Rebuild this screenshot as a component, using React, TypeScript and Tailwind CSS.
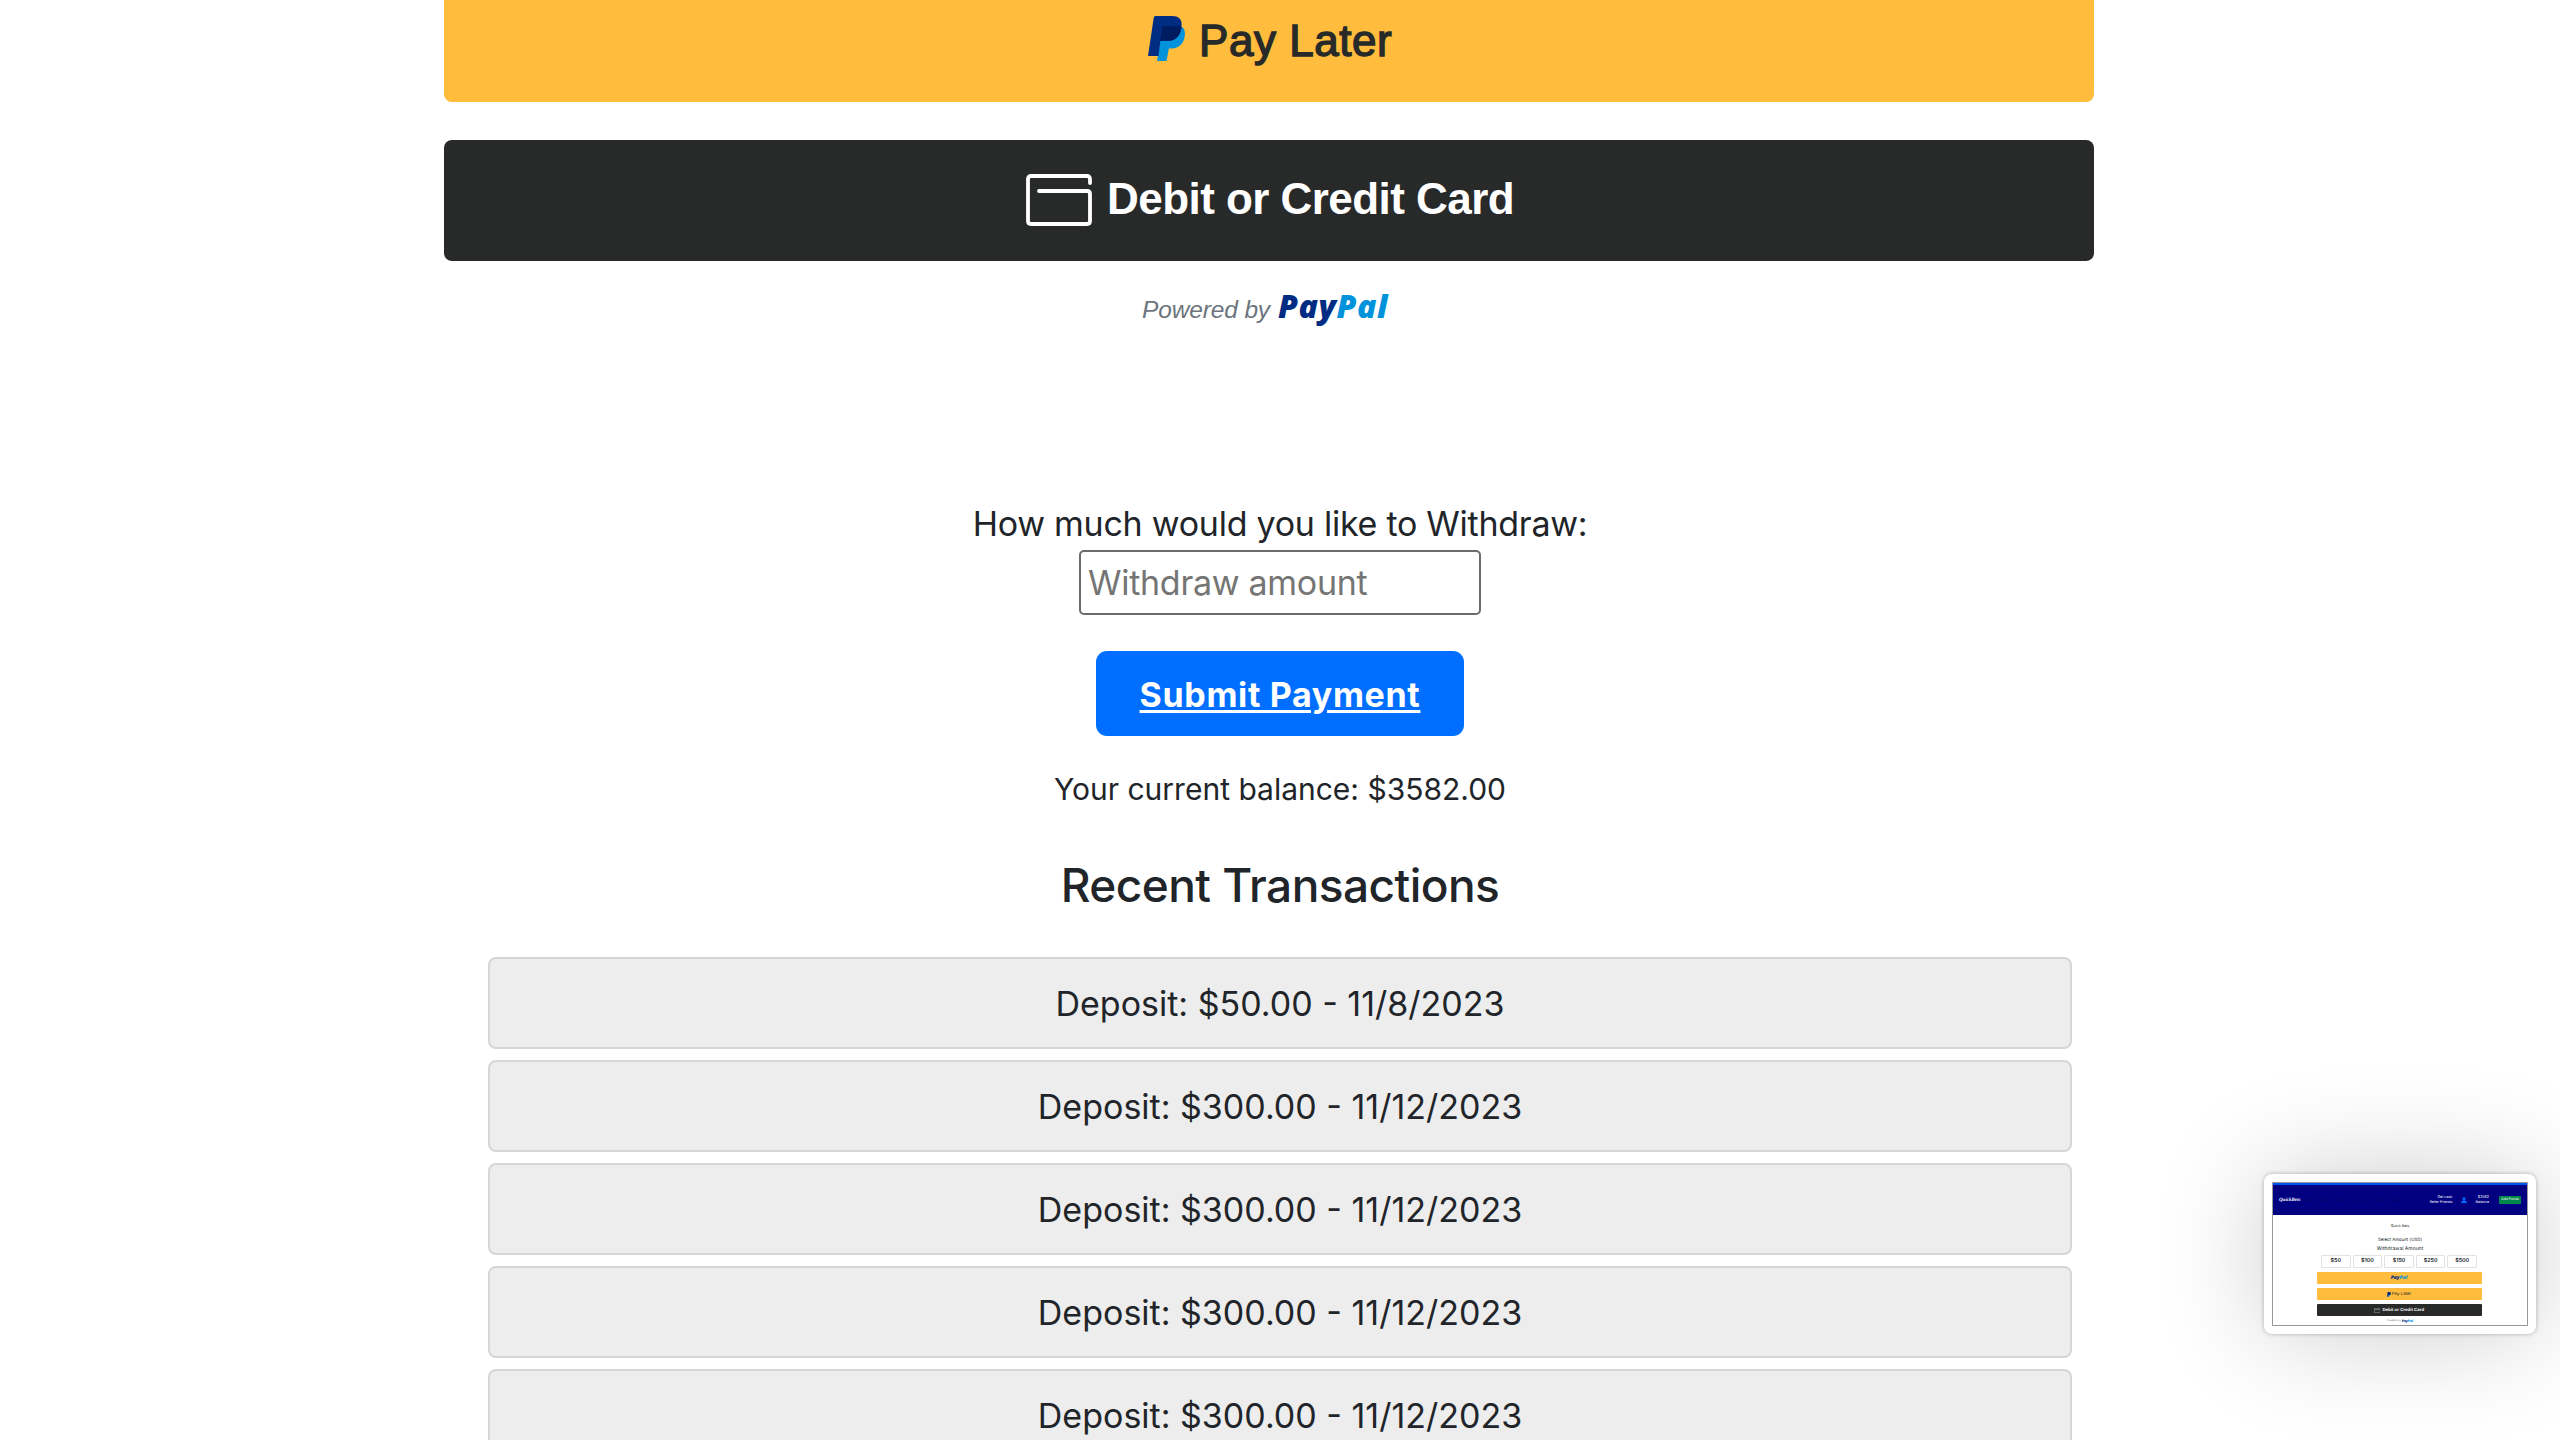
const transactions = [
  'Deposit: $50.00 - 11/8/2023',
  'Deposit: $300.00 - 11/12/2023',
  'Deposit: $300.00 - 11/12/2023',
  'Deposit: $300.00 - 11/12/2023',
  'Deposit: $300.00 - 11/12/2023',
];

const amounts = ['$50', '$100', '$150', '$250', '$500'];
const navLinks = ['Lobby', 'Contact', 'Forum', 'Profile', 'About', 'Login', 'Register'];

function PayPalMark({ className }: { className: string }) {
  return (
    <svg className={className} viewBox="24 33 110 134" preserveAspectRatio="none" aria-hidden="true">
      <path d="M67 63 H118 Q134 67 134 84 Q132 127 94 130 H86 L79 167 H51 L60 107 Z" fill="#0093dc" />
      <path d="M46 33 H96 C115 33 124 42 124 58 C122 92 106 107 82 107 H61 L55 152 H24 L41 38 Q42 33 46 33 Z" fill="#002c83" />
      <path d="M72 63 H111 Q120 63 124 67 C119 94 106 107 82 107 H60 L66 68 Q67 63 72 63 Z" fill="#001c60" />
    </svg>
  );
}

function CardIcon({ className }: { className: string }) {
  return (
    <svg className={className} viewBox="0 0 66 52" fill="none" stroke="currentColor" strokeWidth="3.8" strokeLinecap="round" aria-hidden="true">
      <path d="M64 9 V5 Q64 2 61 2 H5 Q2 2 2 5 V47 Q2 50 5 50 H61 Q64 50 64 47 V20 Q64 17 61 17 H13" />
    </svg>
  );
}

function PayPalWord({ className }: { className: string }) {
  return (
    <span className={`font-['Open_Sans',sans-serif] font-extrabold italic text-[#002c83] ${className}`}>
      Pay<span className="text-[#0093dc]">Pal</span>
    </span>
  );
}

function Preview() {
  return (
    <div className="absolute left-[2264px] top-[1174px] h-[160px] w-[272px] rounded-lg bg-white p-2 shadow-[0_0_4px_rgba(0,0,0,0.28),0_0_110px_rgba(0,0,0,0.2)] [text-rendering:geometricPrecision]">
      <div className="flex h-full flex-col items-center overflow-hidden border border-[#999] bg-white font-[Inter,sans-serif] text-[#212529]">
        <div className="h-[2px] w-full shrink-0 bg-[#0055f0]" />
        <div className="flex h-[30px] w-full shrink-0 items-center whitespace-nowrap bg-[#000080] pl-[6px] pr-[6px] text-white">
          <span className="w-[26px] font-['Liberation_Serif',serif] text-[5px] font-bold italic leading-none">QuickBets</span>
          <nav className="flex w-[96px] justify-between text-[2.8px] leading-none text-[#000050]">
            {navLinks.map((l) => (
              <span key={l}>{l}</span>
            ))}
          </nav>
          <div className="ml-auto text-right text-[3.6px] leading-[5px]">
            <div>Get cash</div>
            <div>Refer Friends</div>
          </div>
          <svg className="ml-[9px] h-[6px] w-[6px]" viewBox="0 0 12 12" fill="#0066ff" aria-hidden="true">
            <ellipse cx="6" cy="4" rx="3" ry="4" />
            <path d="M0 12 V10 Q1 8 4.500 7.500 H7.500 Q11 8 12 10 V12 Z" />
          </svg>
          <div className="ml-[8px] text-right text-[3.6px] leading-[5px]">
            <div>$3582</div>
            <div>Balance</div>
          </div>
          <div className="ml-[10px] flex h-2 w-[22px] items-center justify-center rounded-[1px] bg-[#00854a] text-[3.5px] leading-none">Add Funds</div>
        </div>
        <div className="mt-[9px] text-[3.6px] leading-[5px]">Quick Bets</div>
        <div className="mt-[9px] text-[4.4px] leading-[6px]">Select Amount (USD)</div>
        <div className="mt-[2px] text-[5px] leading-[7px]">Withdrawal Amount</div>
        <div className="mt-[2px] flex shrink-0 gap-[2px] pr-[2px]">
          {amounts.map((a) => (
            <div key={a} className="flex h-[13px] w-[29.600px] items-center justify-center rounded-[1px] border border-[#e2e2e2] text-[5.400px] font-semibold leading-none">
              {a}
            </div>
          ))}
        </div>
        <div className="mr-[2px] mt-[4px] flex w-[165px] shrink-0 flex-col gap-[4px]">
          <div className="flex h-[12px] items-center justify-center rounded-[1px] bg-[#ffbc3d]">
            <PayPalWord className="text-[5px] leading-none" />
          </div>
          <div className="flex h-[12px] items-center justify-center gap-[1px] rounded-[1px] bg-[#ffbc3d] font-['Liberation_Sans',sans-serif] text-[4.500px] leading-none">
            <PayPalMark className="h-[5px] w-[4px]" />
            Pay Later
          </div>
          <div className="flex h-[12px] items-center justify-center gap-[2px] rounded-[1px] bg-[#282a29] font-['Liberation_Sans',sans-serif] text-[4.400px] font-bold leading-none text-white">
            <CardIcon className="h-[5px] w-[6.500px]" />
            Debit or Credit Card
          </div>
        </div>
        <div className="mt-[2px] flex items-center gap-[1px] text-[2.500px] italic leading-[5px] text-[#6c757d]">
          Powered by <PayPalWord className="text-[3.400px]" />
        </div>
      </div>
    </div>
  );
}

export default function App() {
  return (
    <main className="relative h-[1440px] w-[2560px] overflow-hidden bg-white font-[Inter,sans-serif] text-[#212529]">
      <section className="ml-[444px] w-[1650px] font-['Liberation_Sans',sans-serif]">
        <button className="flex h-[102px] w-full items-start rounded-b-lg bg-[#ffbc3d] pl-[704px] pt-4 text-[44px] leading-[49px] text-[#282a29]">
          <PayPalMark className="h-[45px] w-[37px]" />
          <span className="ml-[14px] whitespace-nowrap tracking-[0.55px] [-webkit-text-stroke:1.4px_#282a29]">Pay Later</span>
        </button>
        <button className="mt-[38px] flex h-[121px] w-full items-start rounded-lg bg-[#282a29] pl-[582px] pt-[34px] text-[44px] font-bold leading-[49px] text-white">
          <CardIcon className="h-[52px] w-[66px]" />
          <span className="ml-[15px] whitespace-nowrap tracking-[-0.55px]">Debit or Credit Card</span>
        </button>
        <div className="mt-[23px] flex h-[43px] items-baseline pl-[698px]">
          <span className="whitespace-nowrap text-[24.5px] italic leading-7 tracking-[-0.14px] text-[#6c757d]">Powered by</span>
          <PayPalWord className="ml-[8px] text-[32px] leading-[43px] tracking-[0.6px]" />
        </div>
      </section>

      <section className="mt-[171px] flex flex-col items-center whitespace-nowrap">
        <label htmlFor="withdraw" className="text-[34px] leading-[51px] tracking-[-0.26px]">
          How much would you like to Withdraw:
        </label>
        <input
          id="withdraw"
          placeholder="Withdraw amount"
          className="mt-px h-[65px] w-[402px] rounded-[5px] border-2 border-[#6b6b6b] bg-white pl-[7px] text-[34px] tracking-[-0.28px] placeholder:text-[#757575]"
        />
        <button className="mt-[36px] flex h-[85px] w-[368px] items-center justify-center rounded-[11px] bg-[#006fff] pt-px text-[34px] font-bold leading-[51px] tracking-[0.65px] text-white underline decoration-[3px] underline-offset-[3px]">
          Submit Payment
        </button>
        <p className="mt-[31px] text-[30px] leading-[45px]">Your current balance: $3582.00</p>
        <h2 className="mt-[45px] text-[46px] font-medium leading-[56px] tracking-[-0.545px]">Recent Transactions</h2>
        <ul className="mt-[44px] flex w-[1584px] flex-col gap-[11px]">
          {transactions.map((t, i) => (
            <li key={i} className="flex h-[92px] shrink-0 items-center justify-center rounded-lg border-2 border-[#d6d6d6] bg-[#ededed] text-[34px] leading-[51px]">
              {t}
            </li>
          ))}
        </ul>
      </section>

      <Preview />
    </main>
  );
}
